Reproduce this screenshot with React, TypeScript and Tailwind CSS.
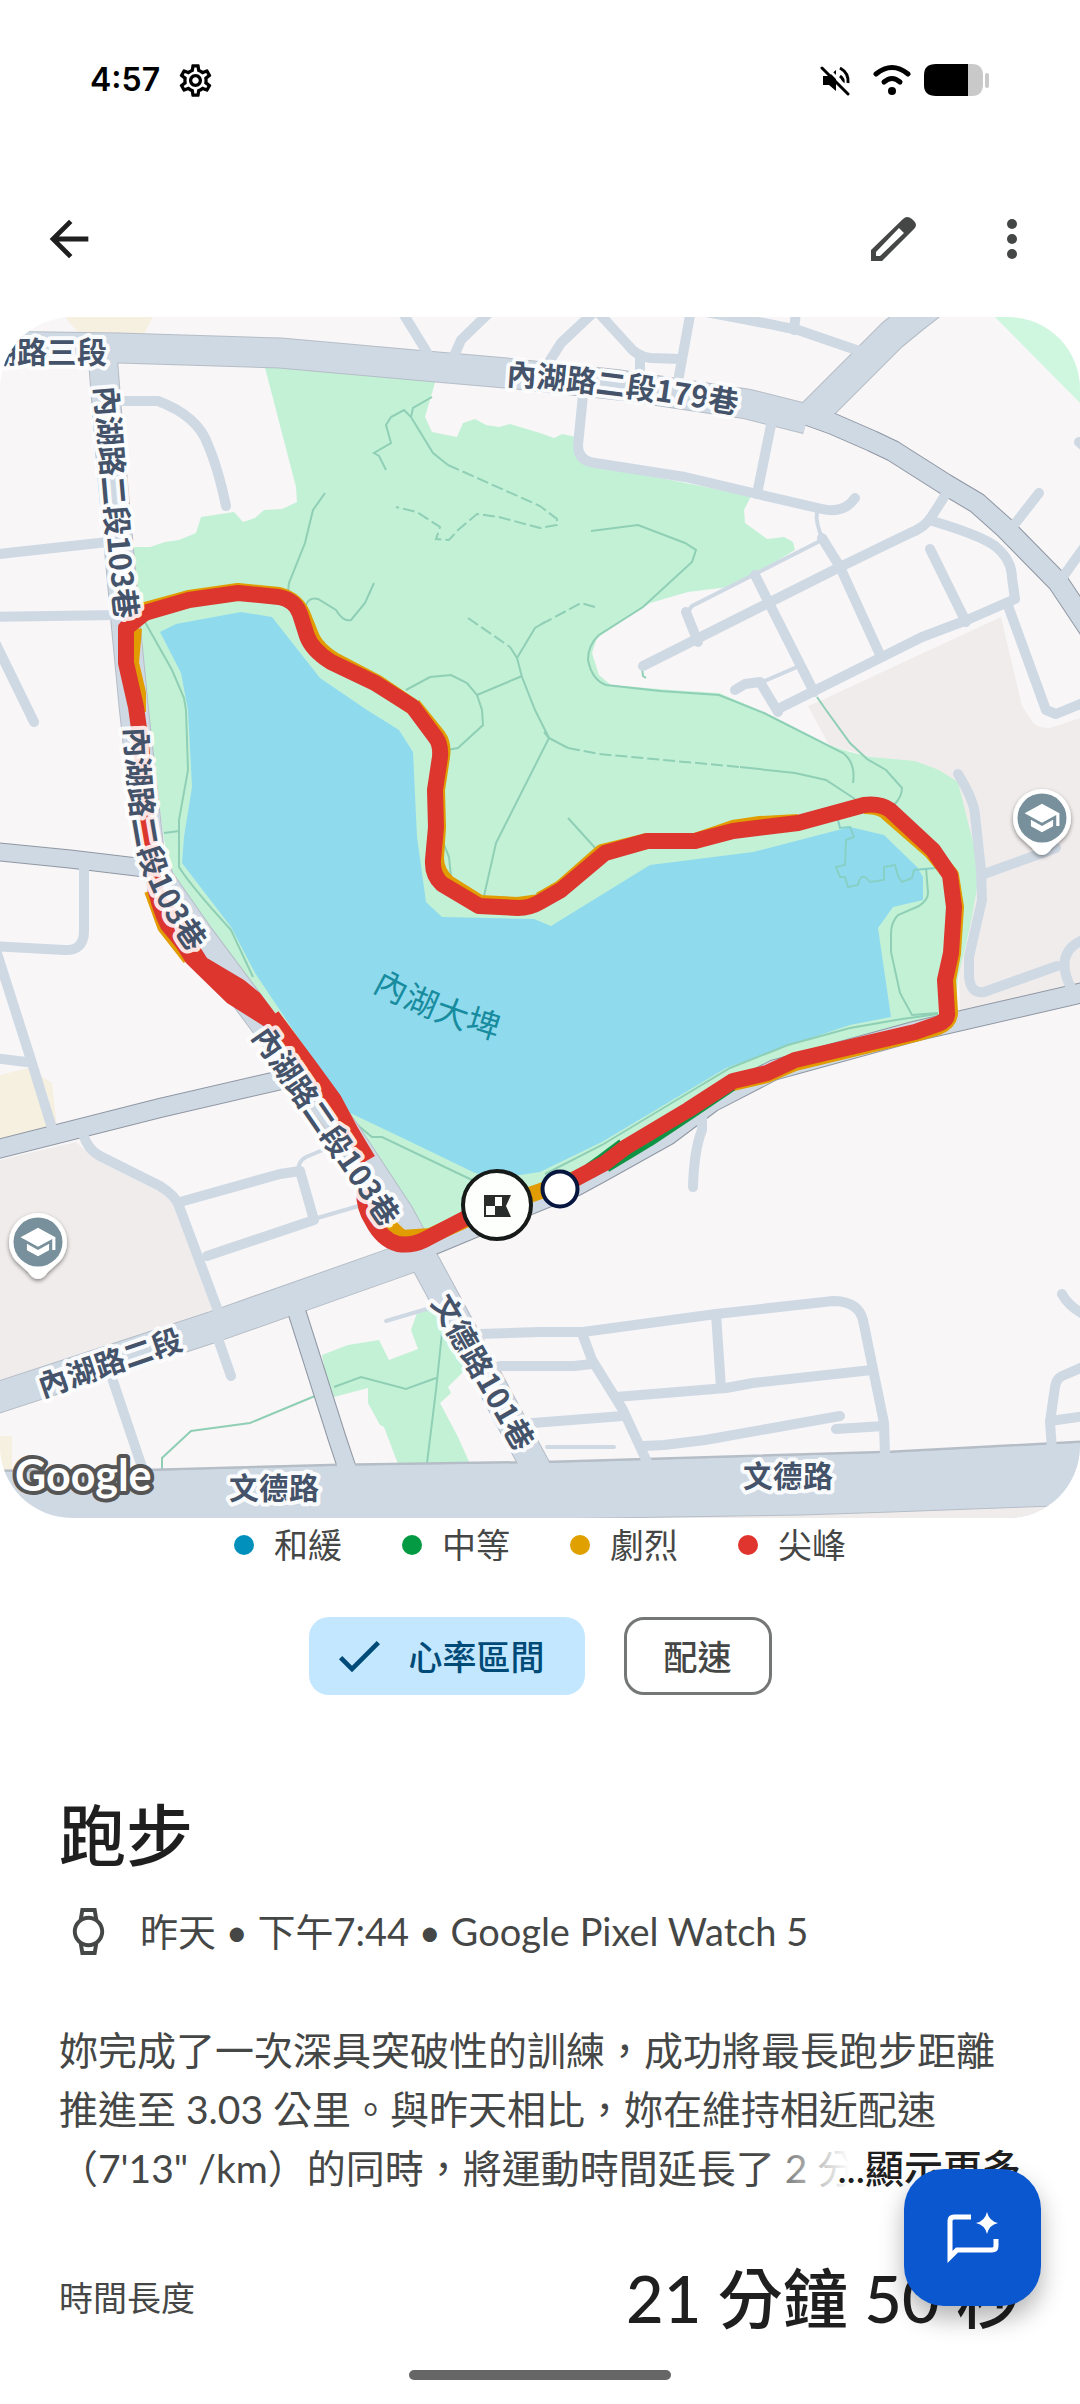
import { MdArrowBack, MdCheck, MdOutlineSettings, MdOutlineWatch, MdSchool } from 'react-icons/md'

type Road = { d: string; w: number; edge: string }
type Label = { id: string; d: string; text: string }

const LAND = '#f8f6f7'
const CAMPUS = '#f0eceb'
const PARK = '#c3f1d6'
const WATER = '#90daee'
const ROAD = '#cfd9e4'
const TRAIL = '#8fcfb5'

const mainRoads: Road[] = [
  { d: 'M-10 346 L119 348 L280 353 L437 367 L506 373 L620 385 L747 404 L807 419', w: 29, edge: '#b5bdc6' },
  { d: 'M809 418 L892 335 L914 317 L936 300', w: 30, edge: '#b5bdc6' },
  { d: 'M805 414 L833 424 L872 441 L893 451 L945 484 L977 503 L1005 528 L1058 582 L1090 630', w: 20, edge: '#8f97a3' },
  { d: 'M103 360 L110 450 L120 560 L126 627 L134 710 L145 810 L150 855 L160 880 L200 937 L241 992 L290 1058 L344 1130 L400 1215 L425 1262 L540 1475', w: 28, edge: '#b5bdc6' },
  { d: 'M-10 1400 L213 1327 L386 1266 L425 1252', w: 30, edge: '#b5bdc6' },
  { d: 'M400 1258 L440 1242 L536 1202 L576 1186 L600 1173 L668 1135 L712 1102 L774 1070 L916 1031 L1090 991', w: 19, edge: '#8f97a3' },
  { d: 'M-10 851 L70 859 L145 868', w: 17, edge: '#8f97a3' },
  { d: 'M-10 1151 L160 1108 L290 1078', w: 18, edge: '#8f97a3' },
  { d: 'M295 1306 L337 1438 L349 1474', w: 17, edge: '#8f97a3' },
]

const sideStreets = [
  'M115 401 H158 Q198 416 208 445 Q218 468 226 506',
  'M-10 555 L108 542',
  'M-10 617 L118 615',
  'M-6 640 L34 722',
  'M401 310 L428 354',
  'M492 310 L461 340 L454 356',
  'M594 312 L561 343 L549 362',
  'M596 310 L628 345 Q636 356 650 358 L681 359',
  'M640 357 V380',
  'M691 310 L679 376',
  'M700 311 Q760 322 798 330 L868 354',
  'M796 312 L794 330',
  'M583 395 L578 445 Q578 461 595 463 L685 477 L753 493 L822 509 Q844 514 855 498',
  'M771 425 L757 494',
  'M822 538 L840 567 L881 657',
  'M686 612 L698 642',
  'M643 666 L840 567 L908 534 Q926 527 932 516 L946 494',
  'M929 520 Q980 535 995 546 Q1012 560 1012 578 L1015 599 L967 620 L922 637 L778 709',
  'M930 549 L966 622',
  'M755 575 L769 603 L814 692',
  'M735 690 L745 684 L760 682 L778 712',
  'M1007 603 L1046 710 L1056 714 L1085 702',
  'M1039 493 L1010 530',
  'M1085 546 L1060 581',
  'M1079 442 L1086 448',
  'M958 774 Q974 800 975 815 L981 870 L982 900 L969 957 V976 Q970 994 984 992 L1057 966',
  'M984 874 L1056 848',
  'M1085 939 Q1052 952 1072 990',
  'M702 1112 V1130 Q694 1150 693 1187',
  'M480 1334 L540 1332 H583 L716 1314 L833 1301 Q858 1301 863 1320 L884 1423 L885 1456',
  'M716 1314 L721 1388',
  'M616 1397 L726 1388 L753 1383 L872 1370',
  'M582 1333 L592 1360 L623 1410 L648 1464',
  'M500 1366 H574 L592 1364',
  'M520 1424 L623 1416',
  'M643 1446 L664 1445 L705 1440 L840 1416',
  'M836 1429 L884 1426',
  'M1062 1294 Q1068 1306 1085 1315',
  'M1085 1366 L1062 1376 Q1056 1379 1055 1387 L1050 1422 L1052 1450',
  'M1050 1421 L1085 1416',
  'M84 868 V931 Q84 951 64 950 L-8 946',
  'M-4 950 L31 1060 L52 1128',
  'M-6 1058 L26 1062',
  'M83 1134 Q88 1150 100 1156 L160 1186 Q176 1196 179 1206 L220 1316',
  'M180 1202 L280 1174 L300 1171 L314 1220 L207 1256',
  'M217 1336 L231 1376',
  'M110 1372 L143 1470',
]

const alleys = [
  'M817 512 Q815 522 823 540',
  'M822 540 L692 606 L686 614',
  'M797 667 L760 683',
  'M298 1172 Q298 1161 306 1157 L330 1147',
  'M314 1219 L362 1205',
  'M386 1321 L430 1308',
  'M547 1447 H614',
]

const trails = [
  'M162 1470 V1458 L191 1431 L250 1423 L315 1396 M334 1387 L361 1377 L406 1389 L436 1378 M442 1333 L436 1390 L427 1463',
  'M325 493 L313 510 L305 543 L289 583 L288 592',
  'M306 605 Q309 597 318 599 L336 610 Q343 622 351 620 L365 603 L374 583',
  'M386 470 L379 456 L374 453 L391 443 L386 425 L391 417 L404 410 L411 417 L433 453 L448 465',
  'M411 417 L413 408 L432 397',
  'M591 531 L638 525 L685 543 L696 550 L692 562 L643 607 L599 635 Q588 645 588 660 Q592 680 606 685 L660 691 L719 695 L764 713 L843 753 Q856 763 853 783',
  'M510 647 L517 658 L522 677 L535 710 L549 738',
  'M517 658 L535 628 L545 622',
  'M406 690 L430 677 L451 675 L467 683 L477 695 L482 710 L483 725 L458 748 L447 750 M477 695 L522 676',
  'M544 732 L549 738 L496 843 L484 896',
  'M549 738 L568 748 M740 767 L795 773 L826 780 L855 799',
  'M817 697 L826 710 L850 743 L867 759 L886 770 L902 788 Q902 796 895 804',
  'M568 818 L597 850',
  'M440 835 L449 857 L451 877',
  'M926 868 L928 893 Q928 900 919 906 L898 915 Q891 922 891 934 V952 L900 993 L912 1015 L938 1013',
  'M938 1014 L902 1019 L850 1028 L788 1045 L730 1068 L660 1110 L602 1145 L545 1174',
  'M145 622 L172 670 L184 698 L186 710 L188 770 L179 820 L179 867 Q190 885 231 930 L253 977',
  'M355 1123 L372 1137 L382 1137 L472 1180',
  'M164 833 L179 831',
  'M642 668 L643 676 L646 678',
]

const dashedTrails = [
  'M448 465 L540 506 L557 519 V525 L540 528 L499 517 L477 514 L458 530 L449 540 L436 539 L440 527 L417 512 L396 507',
  'M595 607 L581 603 L540 625',
  'M468 618 L510 647',
  'M568 748 L599 754 L740 767',
]

const pier =
  'M838 820 L840 828 L850 827 L854 837 L846 840 L845 865 L836 867 L840 877 L845 877 L848 887 L858 885 Q861 870 870 882 L884 880 V867 L895 865 L898 876 L902 882 L912 878 L914 870 L936 868'

const routeRed =
  'M134 616 L189 600 L238 593 L279 597 Q295 600 300 614 L307 636 Q312 650 331 662 L375 683 L413 707 L436 738 Q441 745 440 757 L435 790 L436 827 L433 860 Q432 875 442 884 L479 906 L518 908 Q530 908 540 902 L561 890 L605 853 L647 841 H695 L733 831 L798 823 L864 805 Q880 803 890 810 L933 850 L950 875 L954 907 L951 953 L945 980 L947 1012 Q948 1020 938 1024 L915 1032 L795 1060 L767 1073 L733 1081 L688 1110 L626 1147 L605 1163 L575 1179'

const routeAmber = [
  'M138 612 L189 598 L238 591 L279 595 Q298 600 304 618 L312 638 Q318 650 334 660 L376 682 L413 707',
  'M413 705 L438 736 Q444 744 442 757 L437 790 L438 827 L436 858 Q436 872 448 883 L480 903 L518 905 L540 902',
  'M540 900 L561 888 L602 852 L647 841',
  'M695 841 L733 828 L760 824 L798 822',
  'M864 806 Q876 806 884 810 L931 851 L951 875 L956 907 L953 953 L948 980 L950 1012 Q950 1022 938 1027 L915 1034 L795 1063 L767 1075 L733 1083',
  'M134 628 L131 663 L138 693 L138 712',
  'M152 890 L165 926 L190 958',
  'M498 1206 L575 1179',
  'M388 1225 L402 1238 L430 1236 L470 1218',
]

const labels: Label[] = [
  { id: 'neihu-3', d: 'M-43 352 H160', text: '內湖路三段' },
  { id: 'lane-179', d: 'M507 374 Q610 380 760 407', text: '內湖路二段179巷' },
  { id: 'lane-103-a', d: 'M106 386 L114 490 L120 560 L132 660', text: '內湖路二段103巷' },
  { id: 'lane-103-b', d: 'M136 727 Q139 800 147 840 Q157 895 217 970', text: '內湖路二段103巷' },
  { id: 'lane-103-c', d: 'M260 1030 L420 1263', text: '內湖路二段103巷' },
  { id: 'lane-101', d: 'M440 1297 L543 1477', text: '文德路101巷' },
  { id: 'neihu-2', d: 'M39 1387 L220 1325', text: '內湖路二段' },
  { id: 'wende-west', d: 'M229 1488 H340', text: '文德路' },
  { id: 'wende-east', d: 'M743 1476 H860', text: '文德路' },
]

const zones = [
  { name: '和緩', dot: 'bg-[#0090bb]' },
  { name: '中等', dot: 'bg-[#049a43]' },
  { name: '劇烈', dot: 'bg-[#dfa000]' },
  { name: '尖峰', dot: 'bg-[#df352e]' },
]

function SchoolPin({ x, y }: { x: number; y: number }) {
  return (
    <g transform={`translate(${x} ${y})`}>
      <path
        d="M0 37 C-4 37 -7 34 -10 30 L-22 19 A29 29 0 1 1 22 19 L10 30 C7 34 4 37 0 37Z"
        fill="#fff"
        filter="url(#pin-shadow)"
      />
      <circle r="24.5" fill="#78909c" />
      <MdSchool x={-19} y={-19} size={38} color="#fff" />
    </g>
  )
}

function RouteMap() {
  return (
    <svg viewBox="0 317 1080 1201" className="block h-auto w-full rounded-[72px]" role="img" aria-label="跑步路線圖">
      <defs>
        <filter id="pin-shadow" x="-30%" y="-30%" width="160%" height="160%">
          <feDropShadow dx="0" dy="2" stdDeviation="2" floodColor="#000" floodOpacity="0.45" />
        </filter>
      </defs>

      {/* Land cover */}
      <rect y="317" width="1080" height="1201" fill={LAND} />
      <path d="M65 317 H153 L143 336 H81Z M0 1075 L28 1068 L52 1083 L57 1127 L0 1140Z M0 1436 H12 V1472 H0Z" fill="#f6f0e0" />
      <path d="M995 317 H1080 V403Z" fill="#cff7e0" />
      <path
        d="M1001 617 L822 700 L808 706 L829 745 L955 780 L960 1012 L1080 985 V718 L1050 728 Q1034 728 1030 718 L1022 706Z"
        fill={CAMPUS}
      />
      <path d="M0 1160 L76 1142 L93 1157 L162 1187 L179 1213 L213 1310 L0 1380Z" fill={CAMPUS} />
      <path
        d="M263 360 L437 376 L425 417 L432 432 L457 437 L463 423 L475 419 L486 425 L499 427 L510 424 L540 433 L554 438 L562 434 L576 437 L580 462 L751 496 L744 510 L745 523 L767 539 L784 537 L793 542 L795 550 L753 575 L729 587 L688 592 L650 603 L619 623 L597 638 L592 653 L599 675 L611 685 L671 690 L719 693 L764 712 L829 745 L850 752 L871 757 L915 761 L939 770 L958 782 L980 870 L972 917 L964 953 L958 977 L955 1014 L919 1030 L774 1070 L712 1102 L600 1173 L480 1222 L420 1240 L344 1128 L290 1050 L241 985 L172 888 L163 833 L151 743 L141 627 L132 547 L150 547 L165 542 L179 540 L196 533 L201 517 L234 512 L243 522 L255 518 L264 510 L282 509 L297 502 L296 487Z"
        fill={PARK}
      />
      <path
        d="M322 1355 L348 1345 L379 1340 L389 1360 L418 1349 L411 1330 L417 1313 L437 1307 L465 1370 L448 1387 L451 1393 L440 1403 L458 1437 L470 1464 H398 L384 1427 L380 1425 L368 1403 V1388 L330 1398Z"
        fill={PARK}
      />
      <path
        d="M160 632 L176 624 L241 612 L272 617 L320 678 L367 710 L399 730 L413 752 L417 837 L426 902 L442 917 L534 919 L551 926 L650 865 L753 852 L850 827 L884 835 L917 867 L923 877 V900 L893 907 L878 928 L891 1017 L850 1025 L781 1048 L726 1068 L659 1108 L602 1142 L540 1172 L499 1178 L475 1173 L413 1143 L348 1112 L255 973 L231 927 L182 863 L184 837 L192 787 L188 710 L181 673Z"
        fill={WATER}
      />

      {/* Footpaths */}
      <g fill="none" stroke={TRAIL} strokeWidth="2">
        {trails.map(d => <path key={d} d={d} />)}
        {dashedTrails.map(d => <path key={d} d={d} strokeDasharray="12 4" />)}
        <path d={pier} stroke="#87d0c6" />
      </g>

      {/* Roads: edges first so that junctions stay open */}
      <g fill="none" strokeLinejoin="round">
        {mainRoads.map(r => <path key={r.d} d={r.d} stroke={r.edge} strokeWidth={r.w + 2} />)}
        <path d="M0 1471 L155 1470 L340 1465 L554 1462 L891 1452 L1080 1442" stroke="#b5bdc6" strokeWidth="3" />
        <g stroke={ROAD} strokeLinecap="round">
          {sideStreets.map(d => <path key={d} d={d} strokeWidth="10" />)}
          {alleys.map(d => <path key={d} d={d} strokeWidth="4" />)}
        </g>
        {mainRoads.map(r => <path key={r.d} d={r.d} stroke={ROAD} strokeWidth={r.w} />)}
      </g>
      <path d="M0 1472 L155 1471 L340 1466 L554 1463 L891 1453 L1080 1443 V1518 H0Z" fill={ROAD} />
      <path d="M540 1519 L802 1515 L891 1512 L1080 1505 V1520 H540Z" fill={CAMPUS} stroke="#b5bdc6" />

      {/* Recorded track, coloured by heart rate zone */}
      <g fill="none" strokeLinejoin="round" strokeWidth="16">
        <path d="M605 1165 L630 1150 L648 1139 L690 1111 L733 1082" stroke="#0f9345" />
        <path d="M590 1171 L604 1161 L624 1146" stroke="#0f9345" />
        {routeAmber.map(d => <path key={d} d={d} stroke="#e09c00" />)}
        <path d={routeRed} stroke="#dc362e" />
        <path d="M146 612 L126 628 L126 663 L136 707 L141 743 L148 830 L153 877 Q158 905 168 925 L193 955" stroke="#dc362e" />
        <path d="M272 1016 L310 1067 L334 1100 L350 1130 L368 1160 M364 1190 Q364 1208 372 1220 Q382 1240 398 1244 Q412 1246 424 1240 L468 1217" stroke="#dc362e" />
      </g>
      <path
        d="M152 897 L161 923 L186 963 L227 1003 L265 1027 L286 1043 L296 1040 L275 1013 L260 993 L244 980 L207 958 L170 900Z"
        fill="#dc362e"
      />

      {/* Street names */}
      <g
        className="font-['Noto_Sans_CJK_TC',sans-serif] text-[30px] font-bold"
        fill="#44536a"
        stroke="#fff"
        strokeOpacity="0.9"
        strokeWidth="8"
        strokeLinejoin="round"
        paintOrder="stroke"
      >
        {labels.map(l => (
          <g key={l.id}>
            <path id={l.id} d={l.d} fill="none" stroke="none" />
            <text dy="11">
              <textPath href={`#${l.id}`}>{l.text}</textPath>
            </text>
          </g>
        ))}
      </g>
      <path id="lake" d="M377 980 Q430 1012 530 1038" fill="none" />
      <text dy="11" fill="#178c9e" className="font-['Noto_Sans_CJK_TC',sans-serif] text-[33px]">
        <textPath href="#lake">內湖大埤</textPath>
      </text>
      <text
        x="15"
        y="1491"
        fill="#fff"
        stroke="#555"
        strokeWidth="8"
        strokeLinejoin="round"
        paintOrder="stroke"
        className="font-['Lato',sans-serif] text-[43px] font-bold"
      >
        Google
      </text>

      <SchoolPin x={1042} y={818} />
      <SchoolPin x={38} y={1242} />

      {/* Finish and start */}
      <circle cx="497" cy="1205" r="34" fill="#fdfffc" stroke="#161a18" strokeWidth="4" />
      <path d="M484 1195 H511 L506 1206 L511 1217 H484Z" fill="#282c2a" />
      <path d="M486 1206 H495 V1215 H486Z M495 1197 H502 V1206 H495Z" fill="#fdfffc" />
      <circle cx="560" cy="1189" r="17.5" fill="#fff" stroke="#07163f" strokeWidth="4" />
    </svg>
  )
}

function StatusBar() {
  return (
    <div className="flex h-40 items-center justify-between pr-[90px] pl-[90px] text-black">
      <div className="flex items-center gap-4">
        <span className="font-['Inter',sans-serif] text-[32px] leading-10 font-semibold">4:57</span>
        <MdOutlineSettings size={39} />
      </div>
      <div className="flex items-center">
        <svg width="32" height="32" viewBox="0 0 32 32" aria-hidden="true">
          <path d="M3 12 H9 L16 6 V27 L9 21 H3Z" fill="currentColor" />
          <path d="M20 4 Q29 9 28 19 M20 12 Q24 15 23 19" fill="none" stroke="currentColor" strokeWidth="3" />
          <path d="M4 1 L31 28" stroke="#fff" strokeWidth="3" />
          <path d="M2 4 L28 30" stroke="currentColor" strokeWidth="3" strokeLinecap="round" />
        </svg>
        <svg width="40" height="32" viewBox="0 0 40 32" className="ml-5" aria-hidden="true">
          <g fill="none" stroke="currentColor" strokeWidth="5" strokeLinecap="round">
            <path d="M4 10 Q20 -3 36 10" />
            <path d="M12 18 Q20 11 28 18" />
          </g>
          <circle cx="20" cy="27" r="4" fill="currentColor" />
        </svg>
        <svg width="66" height="32" viewBox="0 0 66 32" className="ml-3" aria-hidden="true">
          <path d="M44 0 H48 Q59 0 59 12 V20 Q59 32 48 32 H44Z" fill="#c9c9c9" />
          <path d="M44 0 H12 Q0 0 0 11 V21 Q0 32 12 32 H44Z" fill="currentColor" />
          <rect x="61" y="9" width="4" height="15" rx="2" fill="#c9c9c9" />
        </svg>
      </div>
    </div>
  )
}

function TopBar() {
  return (
    <header className="flex h-[157px] items-center justify-between pr-9 pl-10 text-[#454746]">
      <button aria-label="返回" className="text-[#1f1f1f]">
        <MdArrowBack size={58} />
      </button>
      <div className="flex items-center gap-[63px]">
        <button aria-label="編輯">
          <svg width="46" height="46" viewBox="0 0 46 46">
            <path
              fillRule="evenodd"
              fill="currentColor"
              d="M0 45 V34 L32 3 Q36 -1 41 3 L43 5 Q47 9 43 13 L11 45Z M5 36 V40 H9 L33 17 L28 12Z"
            />
          </svg>
        </button>
        <button aria-label="更多選項" className="flex w-16 justify-center">
          <svg width="12" height="40" viewBox="0 0 12 40" fill="currentColor">
            <circle cx="6" cy="5" r="5" />
            <circle cx="6" cy="20" r="5" />
            <circle cx="6" cy="35" r="5" />
          </svg>
        </button>
      </div>
    </header>
  )
}

export default function App() {
  return (
    <div
      lang="zh-Hant"
      className="relative min-h-screen overflow-hidden bg-white font-['Lato','Noto_Sans_CJK_TC',sans-serif] text-[#454746]"
    >
      <StatusBar />
      <TopBar />

      <RouteMap />

      <ul className="flex h-[54px] items-center justify-center gap-[60px] text-[34px] leading-[54px]">
        {zones.map(z => (
          <li key={z.name} className="flex items-center gap-5">
            <span className={`size-5 rounded-full ${z.dot}`} />
            {z.name}
          </li>
        ))}
      </ul>

      <div className="mt-[45px] flex justify-center gap-[39px] text-[34px] font-medium">
        <button aria-pressed="true" className="flex h-[78px] items-center gap-[22px] rounded-[20px] bg-[#c3e7ff] pr-10 pl-[22px] text-[#004a77]">
          <MdCheck size={56} />
          心率區間
        </button>
        <button aria-pressed="false" className="h-[78px] rounded-[20px] border-3 border-[#747775] px-[37px]">
          配速
        </button>
      </div>

      <main className="px-[59px]">
        <h1 className="mt-[100px] text-[67px] leading-20 font-medium text-[#1f1f1f]">跑步</h1>
        <div className="mt-7 flex items-center gap-7 pl-1.5 text-[38px] leading-[56px]">
          <MdOutlineWatch size={47} />
          昨天 • 下午7:44 • Google Pixel Watch 5
        </div>

        <div className="relative mt-[62px] text-[39px] leading-[59px] whitespace-nowrap">
          <p className="overflow-hidden">
            妳完成了一次深具突破性的訓練，成功將最長跑步距離
            <br />
            推進至 3.03 公里。與昨天相比，妳在維持相近配速
            <br />
            （7'13" /km）的同時，將運動時間延長了 2 分
          </p>
          <a
            href="#more"
            className="absolute right-0 bottom-0 bg-linear-to-r from-transparent via-white via-35% to-white pl-20 font-medium text-[#1f1f1f]"
          >
            ...顯示更多
          </a>
        </div>

        <dl className="mt-[60px] flex items-center justify-between">
          <dt className="text-[34px] leading-[50px]">時間長度</dt>
          <dd className="text-[65px] leading-20 font-medium text-[#1f1f1f]">21 分鐘 50 秒</dd>
        </dl>
      </main>

      <div className="mx-auto mt-8 mb-6 h-[10px] w-[262px] rounded-full bg-[#666]" />

      <button
        aria-label="詢問教練"
        className="absolute right-[39px] bottom-[98px] flex size-[137px] items-center justify-center rounded-[40px] bg-[#0b57d0] text-white shadow-[0_12px_24px_rgba(0,0,0,0.3)]"
      >
        <svg width="54" height="54" viewBox="0 0 54 54" aria-hidden="true">
          <path d="M25 6 H8 Q4 6 4 10 V46 L11 39 H46 Q50 39 50 35 V28" fill="none" stroke="currentColor" strokeWidth="5" />
          <path d="M41 1 Q43 10 52 12 Q43 14 41 23 Q39 14 30 12 Q39 10 41 1Z" fill="currentColor" />
        </svg>
      </button>
    </div>
  )
}
